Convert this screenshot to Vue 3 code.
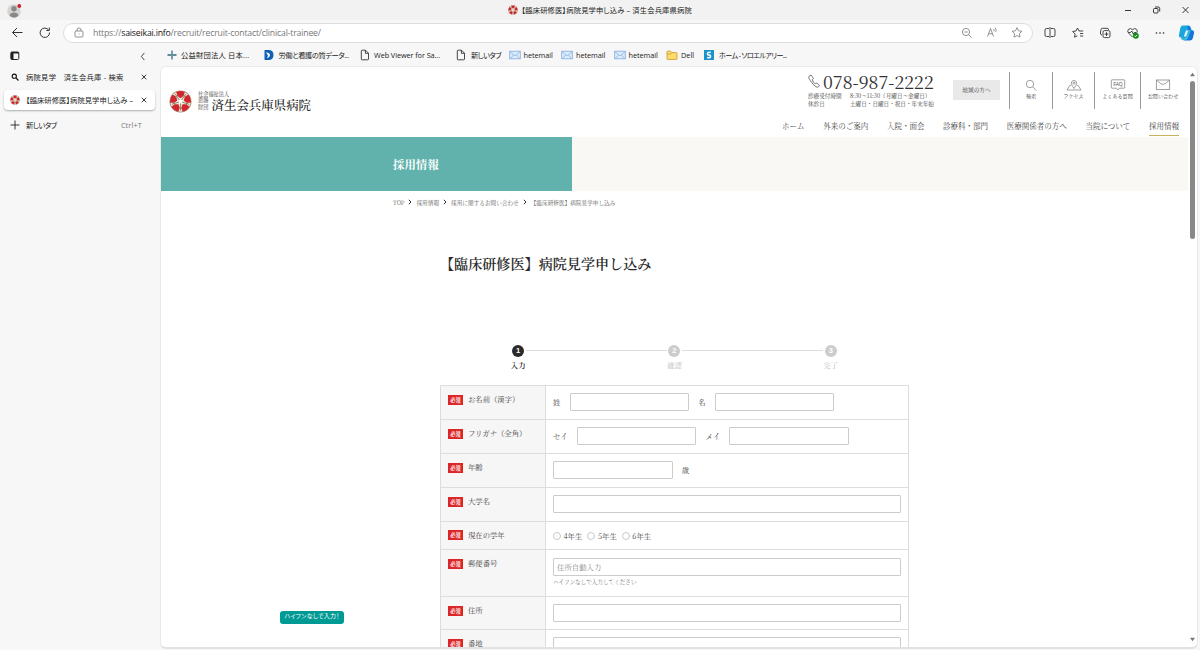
<script setup>
const bookmarks = [
  { icon: 'cross', text: '公益財団法人 日本...', cls: 'b1' },
  { icon: 'd', text: '労働と看護の質データ...', cls: 'b2' },
  { icon: 'file', text: 'Web Viewer for Sa...', cls: 'b3' },
  { icon: 'file', text: '新しいタブ', cls: 'b4' },
  { icon: 'mail', text: 'hetemail', cls: 'b5' },
  { icon: 'mail', text: 'hetemail', cls: 'b5' },
  { icon: 'mail', text: 'hetemail', cls: 'b5' },
  { icon: 'folder', text: 'Dell', cls: 'b6' },
  { icon: 's', text: 'ホーム - ソロエルアリー...', cls: 'b7' },
]

const nav = ['ホーム', '外来のご案内', '入院・面会', '診療科・部門', '医療関係者の方へ', '当院について', '採用情報']
const crumbs = ['TOP', '採用情報', '採用に関するお問い合わせ', '【臨床研修医】病院見学申し込み']
const steps = ['入力', '確認', '完了']
const grades = ['4年生', '5年生', '6年生']

const rows = [
  { label: 'お名前（漢字）', type: 'pair', a: '姓', b: '名', h: 'h34' },
  { label: 'フリガナ（全角）', type: 'pair', a: 'セイ', b: 'メイ', h: 'h34' },
  { label: '年齢', type: 'age', h: 'h34' },
  { label: '大学名', type: 'text', h: 'h34' },
  { label: '現在の学年', type: 'radio', h: 'h28' },
  { label: '郵便番号', type: 'zip', h: 'h47' },
  { label: '住所', type: 'text', h: 'h33' },
  { label: '番地', type: 'text', h: 'h34' },
]
</script>

<template>
  <div class="browser">
    <header class="titlebar">
      <svg class="avatar" viewBox="0 0 16 16">
        <circle cx="7" cy="8" r="6.8" fill="#d6d4d2" />
        <circle cx="7" cy="5.8" r="2.7" fill="#8b8987" />
        <path d="M2.600 12.500c0-4 8.800-4 8.800 0-2 2.700-6.800 2.700-8.800 0z" fill="#8b8987" />
        <circle cx="12.300" cy="3" r="1.900" fill="#d01f2c" />
      </svg>
      <div class="win-title">
        <svg class="fav" viewBox="0 0 24 24"><use href="#emblem" /></svg>
        <span>【臨床研修医】病院見学申し込み – 済生会兵庫県病院</span>
      </div>
      <svg class="win-btns" viewBox="0 0 70 20" fill="none" stroke="#222" stroke-width=".9">
        <path d="M4 10.500h6M61.500 7l6 6M67.500 7l-6 6" />
        <rect x="32.500" y="8.500" width="4.500" height="4.500" rx="1" />
        <path d="M34 7h3.200q1.500 0 1.500 1.500v3" />
      </svg>
    </header>

    <div class="toolbar">
      <svg class="nav-btns" viewBox="0 0 62 24" fill="none" stroke="#333" stroke-width="1">
        <path d="M22.500 11.500h-10M17 7L12.500 11.500l4.500 4.500" />
        <path d="M48.600 9A4.700 4.700 0 1 0 49.500 11.500M49.300 6.500v3h-3" />
      </svg>
      <div class="address">
        <svg class="lock" viewBox="0 0 10 12" fill="none" stroke="#777" stroke-width=".8">
          <rect x="1" y="4" width="8" height="6" rx="1" /><path d="M3 4V3a2 2 0 0 1 4 0v1M5 6.500v1" />
        </svg>
        <span class="url">https://<b>saiseikai.info</b>/recruit/recruit-contact/clinical-trainee/</span>
        <svg class="addr-icons" viewBox="0 0 64 16" fill="none" stroke="#777" stroke-width=".8">
          <circle cx="6" cy="7" r="3.600" /><path d="M8.700 9.700l3 3M4.300 7h3.400" />
          <path d="M27.500 11.500l3-8 3 8M28.500 8.700h4M33.500 4q1 1 .4 2.400M35 2.500q1.800 2 .8 4.400" />
          <path d="M57 2.700l1.500 3.100 3.400.5-2.500 2.400.6 3.400-3-1.600-3 1.600.6-3.400-2.500-2.400 3.400-.5z" />
        </svg>
      </div>
      <svg class="tools" viewBox="0 0 160 24" fill="none" stroke="#333" stroke-width=".9">
        <path d="M9 7.500H6.500Q5 7.500 5 9v5Q5 15.500 6.500 15.500H9M11 7.500h2.500Q15 7.500 15 9v5Q15 15.500 13.500 15.500H11M10 6v11" />
        <path d="M37.300 14.800l-2.800 1.400.6-3.300-2.500-2.400 3.400-.5L37.500 7l1.500 3h4.200M40 12.500h3.200M40 15h3.200" />
        <path d="M62 14.200q-1.800-.5-1.600-2.200l.6-3.500q.2-1.300 1.600-1.200h4.500q1.500 0 1.500 1.500" />
        <rect x="63" y="9.600" width="7" height="7" rx="1.500" /><path d="M66.500 11.200v3.800M64.600 13.100h3.800" />
        <path d="M92.500 16l-4-4q-1.600-2 0-3.700 2-1.700 4 .4 2-2.100 4-.4 1.500 1.600.3 3.400M88.500 11.500h2l1.300-1.500 1.500 3 1-1.500h2" />
        <circle cx="95.800" cy="14.700" r="3" fill="#168a1e" stroke="none" /><path d="M94.400 14.700l1 1 1.800-1.800" stroke="#fff" />
        <g fill="#222" stroke="none"><circle cx="116.500" cy="12" r=".8" /><circle cx="120" cy="12" r=".8" /><circle cx="123.500" cy="12" r=".8" /></g>
        <g stroke="none">
          <path d="M143 4.500h5.500q2 0 2.500 2.500l.5 2h-3.500l-2.500 7.500H141q-2.500 0-2-2.500l1.200-6.500q.6-3 2.800-3z" fill="#1aa5dc" />
          <path d="M147.500 4.500q2.200 0 2.800 2.500l.5 2q3.700 0 3.200 3.200l-1.200 5q-.5 2.300-3 2.300h-4.500q-2.700 0-3.300-3.500h3.500l2.500-8z" fill="#1674dc" />
          <path d="M140.500 16.500h4.500l2.500-7.500h3.300l-2.300 7q-.8 2.800-2.800 3.300-4.200.4-5.200-2.800z" fill="#35b9d8" />
          <path d="M146 9.500h2.200L146 15.500h-2.200z" fill="#e9f8ff" />
        </g>
      </svg>
    </div>

    <div class="main">
      <aside class="side">
        <div class="side-top">
          <svg class="panel-icon" viewBox="0 0 10 10"><rect x=".8" y="1" width="8" height="7.500" rx="1.200" fill="none" stroke="#222" /><path d="M1 1h2.500v7.500H1zM1 1h8v1.500H1z" fill="#222" /></svg>
          <svg class="chev" viewBox="0 0 6 10" fill="none" stroke="#333"><path d="M4.500 1L1.200 5l3.300 4" /></svg>
        </div>
        <div class="tab">
          <svg class="tab-icon" viewBox="0 0 10 10" fill="none" stroke="#111" stroke-width="1.100"><circle cx="4.300" cy="4.200" r="2.100" /><path d="M6 6l2.500 2.500" /></svg>
          <span class="tab-text t1">病院見学　済生会兵庫 - 検索</span>
          <svg class="x" viewBox="0 0 6 6" stroke="#222" stroke-width=".9"><path d="M.7.7l4.600 4.600M5.300.7L.7 5.300" /></svg>
        </div>
        <div class="tab active">
          <svg class="tab-icon" viewBox="0 0 24 24"><use href="#emblem" /></svg>
          <span class="tab-text t2">【臨床研修医】病院見学申し込み –</span>
          <svg class="x" viewBox="0 0 6 6" stroke="#222" stroke-width=".9"><path d="M.7.7l4.600 4.600M5.300.7L.7 5.300" /></svg>
        </div>
        <div class="tab new">
          <svg class="tab-icon" viewBox="0 0 10 10" stroke="#222" stroke-width=".9"><path d="M5 .5v9M.5 5h9" /></svg>
          <span class="tab-text t3">新しいタブ</span>
          <span class="key">Ctrl+T</span>
        </div>
      </aside>

      <div class="right">
        <div class="bookmarks">
          <div v-for="(b, i) in bookmarks" :key="i" class="bm" :class="b.cls">
            <svg v-if="b.icon === 'cross'" viewBox="0 0 12 12"><path d="M6 1.500v9" stroke="#2d6fae" stroke-width="1.300" /><path d="M1.500 6h9" stroke="#1c4678" stroke-width="1.300" /><circle cx="6" cy="6" r="1.500" fill="#5da36f" /></svg>
            <svg v-else-if="b.icon === 'd'" viewBox="0 0 12 12"><path d="M1.500 1H5.500q5 0 5 5t-5 5h-4z" fill="#1160b7" /><path d="M3 3.500q3.500-.3 4 2.500-.3 2.800-3 3.300L5 6.500z" fill="#fff" /></svg>
            <svg v-else-if="b.icon === 'file'" viewBox="0 0 12 12" fill="none" stroke="#333" stroke-width=".9"><path d="M2.300 2q0-.8.8-.8H6.500L9.500 4.200V10q0 .8-.8.8H3.100q-.8 0-.8-.8zM6.400 1.300v3h3" /></svg>
            <svg v-else-if="b.icon === 'mail'" viewBox="0 0 12 12"><rect x=".7" y="2.200" width="10.600" height="7.600" fill="#dcecfb" stroke="#7fabdf" stroke-width=".8" /><path d="M1 2.800l5 4 5-4M1.500 9.500L4.500 6M10.500 9.500L7.500 6" fill="none" stroke="#7fabdf" stroke-width=".7" /></svg>
            <svg v-else-if="b.icon === 'folder'" viewBox="0 0 12 12"><path d="M1 3q0-1 1-1h2.500L6 3.500h4q1 0 1 1V9.500q0 1-1 1H2q-1 0-1-1z" fill="#ffdb6b" stroke="#c69b2b" stroke-width=".8" /><path d="M1 5h4l1.200-1.500" fill="none" stroke="#c69b2b" stroke-width=".7" /></svg>
            <svg v-else viewBox="0 0 12 12"><rect x="1" y="1" width="10" height="10" fill="#1b93c9" /><path d="M7.800 3.500Q4.500 2.800 4.500 4.500T6 6t1.500 1.600T4.200 8.500" fill="none" stroke="#fff" stroke-width="1.600" /></svg>
            <span>{{ b.text }}</span>
          </div>
        </div>

        <div class="page">
          <div class="doc">
            <div class="site-head">
              <div class="logo">
                <svg class="emblem" viewBox="0 0 24 24">
                  <g id="emblem">
                    <circle cx="12" cy="12" r="11.500" fill="#a3937c" />
                    <circle cx="12" cy="12" r="10.700" fill="#efe9dc" />
                    <g fill="#d3252d">
                      <path id="petal" d="M7.500 2Q12 .2 16.500 2L15.200 6.200 12 8.500 8.800 6.200z" />
                      <use href="#petal" transform="rotate(72 12 12)" />
                      <use href="#petal" transform="rotate(144 12 12)" />
                      <use href="#petal" transform="rotate(216 12 12)" />
                      <use href="#petal" transform="rotate(288 12 12)" />
                    </g>
                    <g stroke="#8f7b62" stroke-width=".9">
                      <path id="stem" d="M12 12v9.500M10.500 18.500l1.500 1 1.500-1" fill="none" />
                      <use href="#stem" transform="rotate(72 12 12)" />
                      <use href="#stem" transform="rotate(144 12 12)" />
                      <use href="#stem" transform="rotate(216 12 12)" />
                      <use href="#stem" transform="rotate(288 12 12)" />
                    </g>
                    <circle cx="12" cy="12" r="2" fill="#fff" />
                  </g>
                </svg>
                <div class="logo-text">
                  <div class="corp">社会福祉法人</div>
                  <div class="logo-row">
                    <div class="onshi"><span>恩賜</span><span>財団</span></div>
                    <div class="hospital">済生会兵庫県病院</div>
                  </div>
                </div>
              </div>
              <div class="head-right">
                <div class="head-top">
                  <div class="tel">
                    <div class="tel-num">
                      <svg viewBox="0 0 12 14" fill="none" stroke="#555" stroke-width=".8"><path d="M1.200 2.200L3 1l2.500 3.500-1.300 1.200q1 2.600 3 4.200L8.800 9l2.800 2.600-1.500 1.600q-2 .6-5-3T1 4.500q-.5-1.300.2-2.300z" /></svg>
                      <span>078-987-2222</span>
                    </div>
                    <div class="hours"><span>診療受付時間</span><span>8:30～11:30（月曜日～金曜日）</span></div>
                    <div class="hours"><span>休診日</span><span>土曜日・日曜日・祝日・年末年始</span></div>
                  </div>
                  <div class="region">地域の方へ</div>
                  <div class="quick q1">
                    <svg viewBox="0 0 16 12"><circle cx="7" cy="5" r="3.700" /><path d="M9.700 7.800l3.500 3.700" /></svg>
                    <span>検索</span>
                  </div>
                  <div class="quick q2">
                    <svg viewBox="0 0 16 12"><path d="M5 6.500H3.800L1 11h14l-2.800-4.500H11M8 9.500Q5.300 5.800 5.300 4.200a2.700 2.700 0 0 1 5.400 0Q10.700 5.800 8 9.500z" /><circle cx="8" cy="4.200" r="1" /></svg>
                    <span>アクセス</span>
                  </div>
                  <div class="quick q3">
                    <svg viewBox="0 0 16 12"><path d="M2 .8h12q.7 0 .7.700v7q0 .7-.7.700H9.500L8 11 6.500 9.200H2q-.7 0-.7-.700v-7Q1.300.8 2 .8z" /><text x="8" y="7" text-anchor="middle">FAQ</text></svg>
                    <span>よくある質問</span>
                  </div>
                  <div class="quick q4">
                    <svg viewBox="0 0 16 12"><rect x="1.300" y="1" width="13.400" height="9.500" /><path d="M2 1.500l3.800 3.200q2.200 1.300 4.400 0L14 1.500" /></svg>
                    <span>お問い合わせ</span>
                  </div>
                </div>
                <nav class="gnav">
                  <span v-for="(n, i) in nav" :key="n" :class="{ on: i === nav.length - 1 }">{{ n }}</span>
                </nav>
              </div>
            </div>

            <div class="banner"><div class="banner-title">採用情報</div></div>

            <div class="crumbs">
              <template v-for="(c, i) in crumbs" :key="c">
                <svg v-if="i" viewBox="0 0 4 6" fill="none" stroke="#333"><path d="M.8.800L3 3 .8 5.200" /></svg>
                <span>{{ c }}</span>
              </template>
            </div>

            <h1>【臨床研修医】病院見学申し込み</h1>

            <div class="steps">
              <div v-for="(s, i) in steps" :key="s" class="step" :class="{ now: i === 0 }">
                <i>{{ i + 1 }}</i>
                <span>{{ s }}</span>
              </div>
            </div>

            <div class="form">
              <div v-for="r in rows" :key="r.label" class="row" :class="[r.h, r.type]">
                <div class="th"><em>必須</em><span>{{ r.label }}</span></div>
                <div class="td">
                  <template v-if="r.type === 'pair'">
                    <label>{{ r.a }}</label><input class="short">
                    <label class="second">{{ r.b }}</label><input class="short">
                  </template>
                  <template v-else-if="r.type === 'age'">
                    <input class="short"><label class="second">歳</label>
                  </template>
                  <template v-else-if="r.type === 'radio'">
                    <span v-for="g in grades" :key="g" class="opt"><i></i>{{ g }}</span>
                  </template>
                  <template v-else-if="r.type === 'zip'">
                    <input placeholder="住所自動入力">
                    <small>ハイフンなしで入力してください</small>
                  </template>
                  <input v-else>
                </div>
              </div>
            </div>
          </div>

          <div class="scroll">
            <svg viewBox="0 0 8 6"><path d="M4 1l3 4H1z" fill="#777" /></svg>
            <div class="thumb"></div>
            <svg class="down" viewBox="0 0 8 6"><path d="M4 5L1 1h6z" fill="#777" /></svg>
          </div>
          <div class="tip">ハイフンなしで入力！</div>
        </div>
      </div>
    </div>
  </div>
</template>

<style>
body { margin: 0; overflow: hidden; }
</style>

<style scoped>
* { box-sizing: border-box; }
svg { display: block; flex: none; }
.browser {
  width: 1200px; height: 650px; overflow: hidden;
  display: flex; flex-direction: column;
  background: #f7f7f7; color: #222;
  font-family: "Open Sans", "Noto Sans CJK JP", sans-serif;
  font-size: 7.3px; font-feature-settings: "palt"; white-space: nowrap;
}

/* window frame */
.titlebar { height: 20px; background: #f2f2f2; display: flex; align-items: center; justify-content: space-between; padding: 0 9px 0 7px; }
.avatar { width: 16px; height: 16px; margin-top: 1px; }
.win-title { display: flex; align-items: center; gap: 4px; width: 186px; margin-left: 57px; letter-spacing: .14px; }
.fav { width: 10px; height: 10px; }
.win-btns { width: 70px; height: 20px; }
.toolbar { height: 25px; display: flex; align-items: center; }
.nav-btns { width: 62px; height: 24px; }
.address {
  width: 970px; height: 20px; margin-left: 1px; padding: 0 8px 0 10px;
  display: flex; align-items: center;
  background: #fff; border: 1px solid #ddd; border-radius: 10px;
}
.lock { width: 10px; height: 12px; }
.url { margin-left: 9px; font-size: 8.700px; letter-spacing: -.18px; line-height: 12px; color: #777; flex: 1; }
.url b { font-weight: 400; color: #111; }
.addr-icons { width: 64px; height: 16px; }
.tools { width: 160px; height: 24px; margin-left: 7px; }
.main { flex: 1; display: flex; min-height: 0; }

/* vertical tabs */
.side { width: 160px; padding: 0 5px 0 4px; }
.side-top { height: 22px; display: flex; align-items: center; justify-content: space-between; padding: 0 9px 0 6px; }
.panel-icon { width: 10px; height: 10px; }
.chev { width: 6px; height: 9px; }
.tab { height: 20px; margin-bottom: 3px; display: flex; align-items: center; padding: 0 8px 0 6px; border-radius: 4px; }
.tab.active { background: #fff; box-shadow: 0 1px 2px rgba(0, 0, 0, .3); }
.tab.new { margin-top: 5px; padding-right: 13px; }
.tab-icon { width: 10px; height: 10px; }
.tab-text { margin-left: 6px; flex: 1; overflow: hidden; }
.t1 { letter-spacing: .26px; }
.t2 { letter-spacing: .04px; }
.t3 { letter-spacing: -.5px; }
.x { width: 6px; height: 6px; }
.key { color: #777; letter-spacing: .15px; }

.right { width: 1040px; display: flex; flex-direction: column; }
.bookmarks { height: 21px; display: flex; align-items: center; padding: 0 0 2px 6px; }
.bm { display: flex; align-items: center; gap: 3px; flex: none; }
.bm svg { width: 12px; height: 12px; }
.b1 { width: 96.500px; letter-spacing: .2px; }
.b2 { width: 96.500px; letter-spacing: -.45px; }
.b2 svg { margin-right: 1px; }
.b3 { width: 96px; letter-spacing: -.08px; }
.b4 { width: 53.500px; letter-spacing: -.65px; }
.b4 svg { margin-right: 1px; }
.b5 { width: 52.500px; letter-spacing: -.05px; }
.b6 { width: 37px; }
.b7 { font-size: 7.100px; letter-spacing: -.62px; }
.b7 svg { margin-right: 1px; }

/* web page */
.page {
  position: relative; flex: none; width: 1038px; height: 583px; overflow: hidden; display: flex;
  background: #fff; border: 1px solid #e9e9e9; border-radius: 6px; border-bottom: 2px solid #e2e2e2;
}
.doc {
  width: 1027px; height: 580px; overflow: hidden; color: #444;
  font-family: "Noto Serif CJK JP", "Noto Serif JP", "Liberation Serif", "Noto Sans CJK JP", serif;
  font-feature-settings: normal;
}
.site-head { height: 70px; display: flex; justify-content: space-between; }
.logo { display: flex; gap: 6px; padding: 22px 0 0 8px; height: 60px; }
.emblem { width: 23px; height: 23px; margin-top: 1px; }
.corp { font-size: 5.200px; line-height: 7px; margin-top: 1px; }
.logo-row { display: flex; gap: 2.500px; }
.onshi { display: flex; flex-direction: column; font-size: 5.200px; line-height: 6.500px; width: 11px; }
.hospital { font-size: 12.450px; line-height: 17px; color: #222; font-weight: 500; }
.head-right { display: flex; flex-direction: column; align-items: flex-end; padding-right: 9px; }
.head-top { display: flex; height: 43px; padding-top: 5px; }
.tel { width: 145px; }
.tel-num { display: flex; align-items: center; gap: 3px; height: 20px; font-size: 17.900px; line-height: 17px; padding-bottom: 2px; color: #333; }
.tel-num svg { width: 12px; height: 14px; }
.hours { display: flex; font-size: 5.600px; line-height: 8px; }
.hours span:first-child { width: 42px; }
.region { width: 47px; height: 20px; margin: 8px 9px 0 0; background: #e9e9e9; font-size: 5.700px; line-height: 20px; text-align: center; }
.quick { height: 37px; border-left: 1px solid #999; display: flex; flex-direction: column; align-items: center; padding-top: 7px; font-size: 5.100px; line-height: 8px; }
.quick svg { width: 16px; height: 12px; margin-bottom: 1px; fill: none; stroke: #777; stroke-width: .7; }
.quick text { font: 5px "Noto Sans", sans-serif; fill: #555; stroke: none; }
.q1 { width: 43px; }
.q2 { width: 42px; }
.q3 { width: 46px; }
.q4 { width: 39px; padding-left: 6px; }
.gnav { display: flex; gap: 18.700px; margin-top: 8px; font-size: 7.500px; line-height: 16px; }
.gnav .on { border-bottom: 1px solid #c9b25e; height: 18px; }
.banner { height: 54px; background: #faf8f4; }
.banner-title { width: 411px; height: 54px; padding-left: 232px; background: #61b2ac; color: #fff; font-size: 11.400px; font-weight: 700; line-height: 54px; }
.crumbs { display: flex; align-items: center; gap: 4px; height: 22px; padding-left: 232px; font-size: 5.650px; color: #666; }
.crumbs svg { width: 4px; height: 6px; }
h1 { margin: 39px 0 0 279px; font-size: 14.100px; line-height: 22px; font-weight: 600; color: #2a2a2a; }
.steps { display: flex; margin: 71px 0 0 279px; height: 40px; }
.step { width: 156.300px; display: flex; flex-direction: column; align-items: center; font-size: 7.300px; line-height: 10px; color: #ccc; position: relative; }
.step i { width: 12px; height: 12px; border-radius: 50%; background: #ccc; color: #fff; font: 700 7.500px/12px "Liberation Sans", sans-serif; text-align: center; margin-bottom: 3px; }
.step:not(:last-child)::after { content: ""; position: absolute; left: 86px; top: 5px; width: 141px; height: 1px; background: #ddd; }
.step span { font-weight: 600; }
.step.now { color: #222; }
.step.now i { background: #2a2a2a; }

.form { width: 469px; margin-left: 279px; border: 1px solid #ddd; border-bottom: 0; font-size: 7.400px; }
.row { display: flex; border-bottom: 1px solid #ddd; }
.h34 { height: 34px; }
.h28 { height: 28px; }
.h47 { height: 47px; }
.h33 { height: 33px; }
.th { width: 105px; padding: 9px 0 0 7px; display: flex; align-items: flex-start; gap: 5px; background: #f6f6f6; border-right: 1px solid #ddd; line-height: 8px; }
.th span { letter-spacing: -.05px; }
.th em { width: 15px; height: 10px; background: #dc2626; color: #fff; font-style: normal; font-weight: 700; font-size: 5.200px; line-height: 10px; text-align: center; }
.td { flex: 1; display: flex; align-items: flex-start; padding: 7px 7px 0; line-height: 17px; }
.td input { height: 18px; min-width: 0; flex: 1; padding: 0 3px; border: 1px solid #ccc; border-radius: 1px; background: #fff; font: inherit; }
.td input.short { flex: none; width: 119.500px; }
.td input::placeholder { color: #888; opacity: 1; }
.td label { margin-right: 9.200px; }
.td .second { margin-left: 9.200px; }
.radio .th { padding-top: 8px; line-height: 10px; }
.radio .td { gap: 5px; padding-top: 5px; }
.opt { display: flex; align-items: center; gap: 2.500px; }
.opt i { width: 8px; height: 8px; border: 1px solid #c8c8c8; border-radius: 50%; }
.zip .td { flex-direction: column; padding-top: 8px; }
.zip .td input { flex: none; width: 348px; padding-bottom: 1px; }
.zip small { font-size: 5.600px; line-height: 12px; color: #777; }

.scroll { width: 9px; display: flex; flex-direction: column; align-items: center; padding-top: 5px; }
.scroll svg { width: 7px; height: 5px; }
.thumb { width: 5px; height: 158px; margin-top: 4px; border-radius: 3px; background: #888; }
.down { margin-top: auto; margin-bottom: 5px; }
.tip {
  position: absolute; left: 119px; top: 544px; width: 64px; height: 13px; border-radius: 3px;
  background: #009a94; color: #fff; font-size: 6px; letter-spacing: .25px; line-height: 11px; text-align: center;
}
</style>
